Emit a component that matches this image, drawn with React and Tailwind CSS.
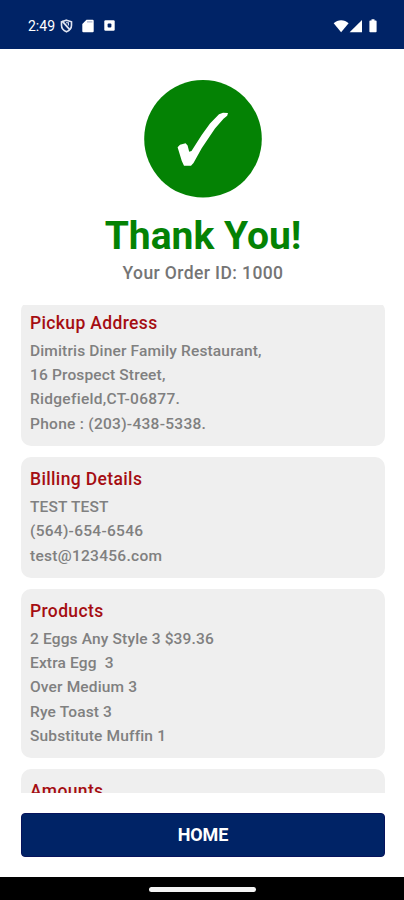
const cards = [
  {
    title: "Pickup Address",
    lines: [
      { text: "Dimitris Diner Family Restaurant," },
      { text: "16 Prospect Street," },
      { text: "Ridgefield,CT-06877.", wide: true },
      { text: "Phone : (203)-438-5338.", wide: true },
    ],
  },
  {
    title: "Billing Details",
    lines: [{ text: "TEST TEST" }, { text: "(564)-654-6546", wide: true }, { text: "test@123456.com", wide: true }],
  },
  {
    title: "Products",
    lines: [
      { text: "2 Eggs Any Style 3 $39.36" },
      { text: "Extra Egg  3" },
      { text: "Over Medium 3" },
      { text: "Rye Toast 3" },
      { text: "Substitute Muffin 1" },
    ],
  },
  { title: "Amounts", lines: [] },
];

function StatusBar() {
  return (
    <header className="flex h-[49px] shrink-0 items-center bg-[#002366] pt-[2px] pr-[26px] pl-7 text-white">
      <span className="w-[28px] text-[14px] leading-none font-normal tracking-[0px]">2:49</span>
      <svg className="ml-[4px] h-[14px] w-[13px]" viewBox="0 0 13 14" fill="none" stroke="#dfe4f2">
        <path d="M6.5 1.2 11.5 2.8V6.3C11.5 9.3 9.4 11.6 6.5 12.8 3.6 11.6 1.5 9.3 1.5 6.3V2.8Z" strokeWidth="1.6" />
        <path d="M2.2 2.2 10 10.8" strokeWidth="1.8" />
        <path d="M6 3.8H8.4V6.6" strokeWidth="1.1" />
      </svg>
      <svg className="ml-[9px] h-[14px] w-[12px]" viewBox="0 0 12 14">
        <path d="M4.5.8H10.6Q11.7.8 11.7 1.9V12.2Q11.7 13.3 10.6 13.3H1.4Q.3 13.3.3 12.2V5Z" fill="#fff" />
        <path d="M5 2.9H10.4" stroke="#8d9abd" strokeWidth=".9" />
      </svg>
      <svg className="ml-[10px] h-[11px] w-[11px]" viewBox="0 0 11 11">
        <rect x=".3" y=".3" width="10.4" height="10.4" rx="1.2" fill="#fff" />
        <rect x="3.6" y="3.6" width="3.8" height="3.8" rx="1" fill="#002366" />
      </svg>
      <svg className="ml-auto h-[14px] w-[45px]" viewBox="0 0 45 14" fill="#fff">
        <path d="M.7 4.2C4.8.1 11.5.1 15.6 4.2L8.1 13.3Z" />
        <path d="M29 1V13.2H16.6Z" />
        <path d="M37.2 1.4H38.5V.3H41.5V1.4H42.8Q43.6 1.4 43.6 2.2V12.5Q43.6 13.3 42.8 13.3H37.2Q36.4 13.3 36.4 12.5V2.2Q36.4 1.4 37.2 1.4Z" />
      </svg>
    </header>
  );
}

function Card({ title, lines }) {
  return (
    <section className="shrink-0 rounded-[10px] bg-[#efefef] px-[9px] pt-2 pb-[9.6px]">
      <h2 className="text-[17.5px] leading-[29.8px] font-medium tracking-[0.36px] text-[#a50d12]">{title}</h2>
      {lines.map(({ text, wide }) => (
        <p
          key={text}
          className={`text-[15.5px] leading-[24.4px] font-medium whitespace-pre text-[#808080] ${
            wide ? "tracking-[0.28px]" : "tracking-[0.15px]"
          }`}
        >
          {text}
        </p>
      ))}
    </section>
  );
}

export default function App() {
  return (
    <div className="flex h-[900px] w-[404px] flex-col overflow-hidden bg-white font-[Roboto,sans-serif]">
      <StatusBar />
      <div className="flex h-[256px] shrink-0 flex-col items-center pt-[31px]">
        <svg className="ml-[2px] size-[118px] shrink-0" viewBox="0 0 118 118">
          <circle cx="59" cy="58.8" r="58.8" fill="#048204" />
          <path d="M33.6 67.3 36 64.8 41.6 63.2 43.6 65.5 45.2 71.8 47.5 71 57.7 55 66 43.5 75 34.2 79 32.8 84 33 83.2 35.7 79.5 38.8 71 48.5 57.7 68.3 49.5 83 47 85.8H40L37.8 81Z" fill="#fff" />
        </svg>
        <h1 className="mt-[15px] ml-[2px] text-[39px] leading-[46px] font-bold text-[#048204]">Thank You!</h1>
        <p className="mt-[3px] ml-[2px] text-[17.5px] leading-[22px] font-medium tracking-[0.4px] text-[#757575]">Your Order ID: 1000</p>
      </div>
      <main className="mr-[19px] ml-[21px] h-[488px] shrink-0 overflow-hidden rounded-t-[2px]">
        <div className="-mt-[4.2px] flex flex-col gap-[11.2px]">
          {cards.map((card) => (
            <Card key={card.title} {...card} />
          ))}
        </div>
      </main>
      <button className="mt-5 mr-[19px] ml-[21px] h-[44px] shrink-0 rounded-[4px] border border-[#07135c] bg-[#002366] pb-[1px] text-[18px] font-bold tracking-[-0.1px] text-white">
        HOME
      </button>
      <footer className="mt-auto flex h-[23px] shrink-0 items-center justify-center bg-black">
        <div className="mt-[1px] h-[5px] w-[107px] rounded-full bg-[#f4f4f4]" />
      </footer>
    </div>
  );
}
